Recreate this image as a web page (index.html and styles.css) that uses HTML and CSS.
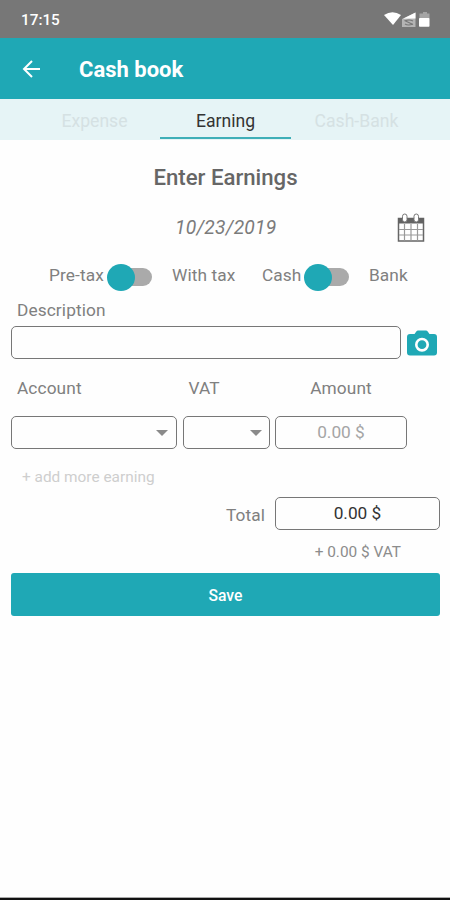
FILE: index.html
```
<!DOCTYPE html>
<html lang="en">
<head>
<meta charset="utf-8">
<title>Cash book</title>
<link rel="stylesheet" href="styles.css">
</head>
<body>
<div class="screen">
  <header class="status">
    <span class="clock">17:15</span>
    <svg class="status-icons" width="48" height="18" viewBox="0 0 48 18">
      <path d="M0 5Q8.500 -.6 17 5L9 15Z" fill="#fff"/>
      <path d="M18 9L31.500 2.500V17H18Z" fill="#b4b4b4"/>
      <path d="M19 8.800L31.500 2.500V8.500Z" fill="#fff"/>
      <path d="M20.500 10.500L29 14.500M21 14Q24 16 29 14M21 11Q25 9 29 11" fill="none" stroke="#777" stroke-width="1.200"/>
      <path d="M37 3.500H39V2H43V3.500H45.500V8.500H35.500V3.500Z" fill="#a5a5a5"/>
      <rect x="35" y="8" width="10.500" height="8.800" rx=".8" fill="#fff"/>
    </svg>
  </header>
  <div class="appbar">
    <svg class="back" width="20" height="18" viewBox="0 0 20 18"><path d="M18 9H2M10 1L2 9L10 17" fill="none" stroke="#fff" stroke-width="2"/></svg>
    <h1 class="title">Cash book</h1>
  </div>
  <nav class="tabs">
    <span class="tab">Expense</span>
    <span class="tab active">Earning</span>
    <span class="tab">Cash-Bank</span>
  </nav>
  <main class="form">
    <h2 class="heading">Enter Earnings</h2>
    <div class="date-row">
      <span class="date">10/23/2019</span>
      <svg class="calendar" width="28" height="30" viewBox="0 0 28 30">
        <path d="M1.500 5.500H26.500V28H1.500Z" fill="#fff" stroke="#666" stroke-width="1.500"/>
        <path d="M1 5H27V10.500H1Z" fill="#636363"/>
        <path d="M7.500 11V27.500M14 11V27.500M20.500 11V27.500M2 16.500H26M2 22H26" stroke="#999" stroke-width="1.200"/>
        <rect x="5.500" y="1" width="4.500" height="8" rx="2.250" fill="#fff" stroke="#777"/>
        <rect x="17" y="1" width="4.500" height="8" rx="2.250" fill="#fff" stroke="#777"/>
      </svg>
    </div>
    <div class="switches">
      <span class="label pretax">Pre-tax</span><span class="switch"></span><span class="label withtax">With tax</span>
      <span class="label cash">Cash</span><span class="switch"></span><span class="label bank">Bank</span>
    </div>
    <div class="label description">Description</div>
    <div class="description-row">
      <div class="field wide"></div>
      <svg width="30" height="26" viewBox="0 0 30 26">
        <path d="M3 4H7.500L9.500 1.200Q10 .5 11 .5H19Q20 .5 20.500 1.200L22.500 4H27Q30 4 30 7V22.500Q30 25.500 27 25.500H3Q0 25.500 0 22.500V7Q0 4 3 4Z" fill="#1fa8b5"/>
        <circle cx="15" cy="14.700" r="5.700" fill="none" stroke="#fff" stroke-width="2.600"/>
      </svg>
    </div>
    <div class="columns captions">
      <span class="label">Account</span><span class="label">VAT</span><span class="label amount">Amount</span>
    </div>
    <div class="columns">
      <div class="field select"></div>
      <div class="field select vat"></div>
      <div class="field placeholder">0.00 $</div>
    </div>
    <div class="add"><span>+ add more earning</span></div>
    <div class="total-row">
      <span class="label">Total</span>
      <div class="field total">0.00 $</div>
    </div>
    <div class="vat-sum">+ 0.00 $ VAT</div>
    <button class="save">Save</button>
  </main>
  <footer class="bottom"></footer>
</div>
</body>
</html>
```
FILE: styles.css
```
* { box-sizing: border-box; }
body { margin: 0; background: #fefefe; font-family: Roboto, "Liberation Sans", sans-serif; color: #777; }
.screen { width: 450px; height: 900px; display: flex; flex-direction: column; }
svg { display: block; flex: none; }
.status { height: 38px; flex: none; background: #777; display: flex; justify-content: space-between; align-items: center; padding: 0 18px 0 21px; }
.clock { color: #fff; font-size: 15.3px; font-weight: 500; line-height: 18px; padding-top: 2px; }
.appbar { height: 61px; flex: none; background: #1fa8b5; display: flex; align-items: center; padding-left: 22px; }
.title { margin: 2px 0 0 37px; color: #fff; font-size: 22px; font-weight: 700; line-height: 28px; }
.tabs { height: 41px; flex: none; background: #e6f4f6; display: grid; grid-template-columns: 131px 131px 131px; padding-left: 29px; }
.tab { text-align: center; font-size: 17.6px; line-height: 45px; color: #d5e1e3; height: 41px; }
.tab.active { color: #333; border-bottom: 2px solid #3fafb8; height: 40px; }
.form { flex: 1; padding: 0 10px 0 11px; }
.heading { margin: 0; padding-top: 21px; height: 67px; text-align: center; font-size: 22.2px; font-weight: 500; line-height: 32px; color: #666; }
.date-row { height: 41px; display: flex; align-items: center; padding: 0 15px 0 164px; justify-content: space-between; }
.date { font-size: 19.3px; font-style: italic; letter-spacing: .2px; color: #7b7b7b; }
.label { font-size: 17.3px; line-height: 22px; letter-spacing: .1px; color: #808080; white-space: nowrap; }
.switches { height: 48px; margin-top: 3px; display: flex; align-items: center; }
.pretax { width: 58px; margin-left: 38px; }
.switch { width: 45px; height: 28px; display: flex; align-items: center; margin-top: 4px; }
.switch::before { content: ""; width: 28px; height: 27px; flex: none; border-radius: 50%; background: #1fa8b5; z-index: 1; }
.switch::after { content: ""; width: 31px; height: 18px; margin-left: -14px; border-radius: 9px; background: #aaa; }
.withtax { width: 90px; margin-left: 20px; }
.cash { width: 42px; }
.bank { margin-left: 20px; }
.description { height: 27px; padding-left: 6px; }
.description-row { height: 33px; display: flex; align-items: center; gap: 6px; }
.field { height: 33px; border: 1px solid #777; border-radius: 5px; background: #fefefe; display: flex; align-items: center; justify-content: center; font-size: 17.3px; }
.wide { width: 390px; }
.columns { display: grid; grid-template-columns: 166px 87px 132px; gap: 5.5px; }
.captions { height: 57px; padding-top: 18px; }
.captions .label { padding-left: 6px; }
.captions .amount { padding: 0; text-align: center; }
.select { justify-content: flex-end; padding-right: 8px; }
.select::after { content: ""; border: 6px solid transparent; border-top-color: #8a8a8a; border-bottom: 0; }
.vat { padding-right: 7px; }
.placeholder, .total { padding-bottom: 2px; }
.placeholder { color: #a5a5a5; }
.add { height: 48px; padding: 16px 0 0 11px; font-size: 15.4px; line-height: 24px; color: #cecece; }
.total-row { display: flex; align-items: center; justify-content: flex-end; gap: 10px; }
.total-row .label { padding-top: 3px; }
.total { width: 165px; color: #333; }
.vat-sum { height: 43px; padding: 10px 39px 0 0; text-align: right; font-size: 15.4px; line-height: 24px; color: #8c8c8c; }
.save { display: block; width: 100%; height: 43px; padding: 2px 0 0; border: 0; border-radius: 3px; background: #1fa8b5; color: #fff; font: 500 15.7px/24px Roboto, "Liberation Sans", sans-serif; }
.bottom { height: 3px; flex: none; background: #111; border-top: 1px solid #aaa; }
```
